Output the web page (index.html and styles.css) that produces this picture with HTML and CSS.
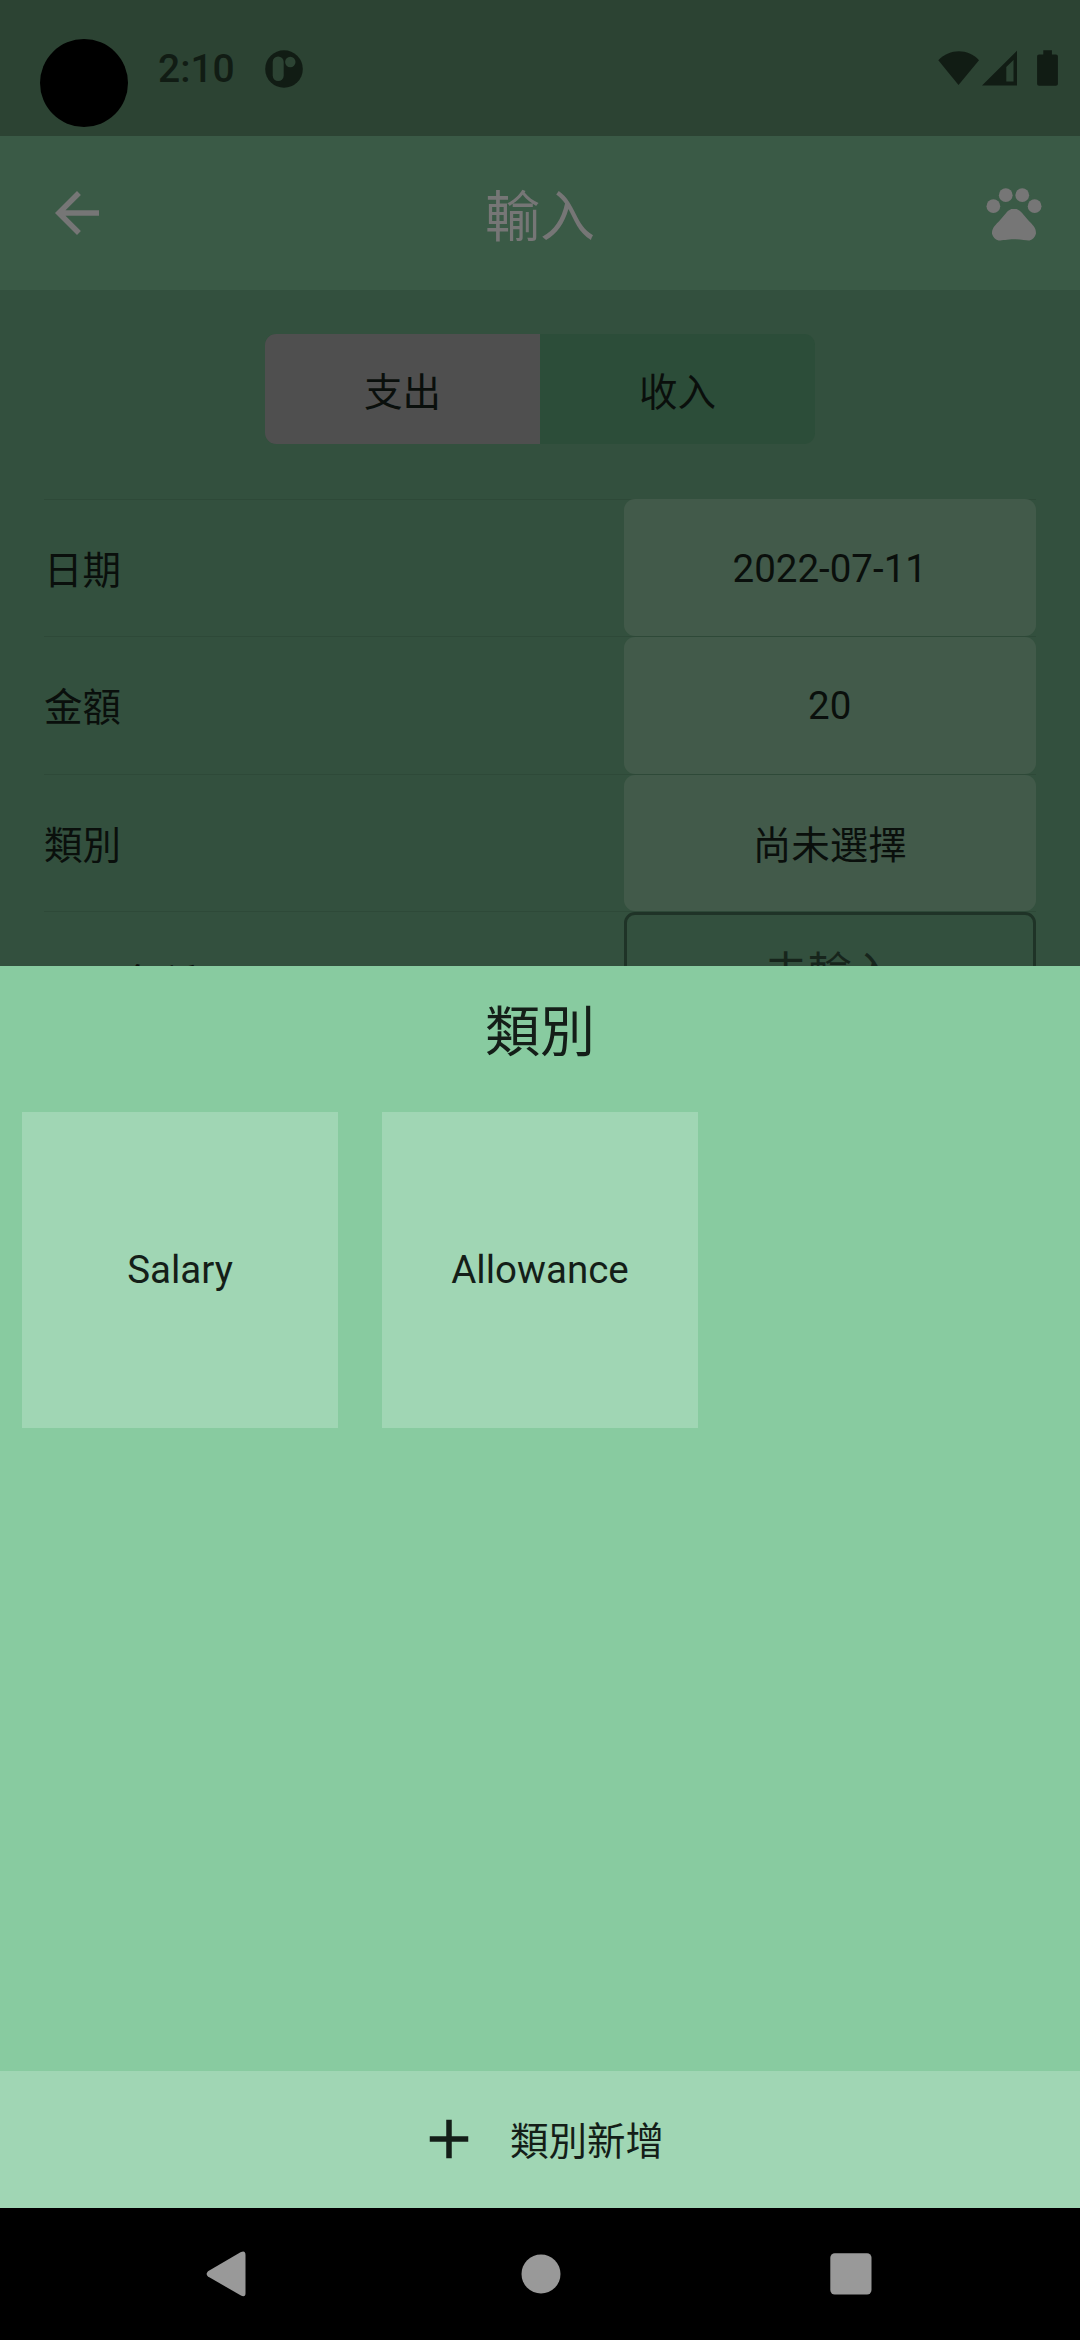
FILE: index.html
```html
<!DOCTYPE html>
<html lang="zh-Hans">
<head>
<meta charset="utf-8">
<title>輸入</title>
<link rel="stylesheet" href="styles.css">
</head>
<body>
<div class="screen">
  <header class="status">
    <div class="camera"></div>
    <span class="clock">2:10</span>
    <svg class="notice" width="38" height="38" viewBox="0 0 38 38"><circle cx="19" cy="19" r="18.8" fill="#111c14"/><rect x="7.7" y="6.5" width="11" height="24.5" rx="5.5" fill="#2c4333"/><circle cx="25.3" cy="12" r="5.2" fill="#2c4333"/></svg>
    <svg class="signals" width="122" height="38" viewBox="0 0 122 38" fill="#111c14"><path d="M.3 10.2C12-1.7 30-1.7 41 10.2L20.500 35z"/><path fill-rule="evenodd" d="M44 35.500L79 .8V35.500zM68.300 17V31.500H75.500V10z"/><path d="M105.300.3h8.600v4.200h4c1.200 0 2 .8 2 2v27.300c0 1.200-.8 2-2 2h-16.800c-1.200 0-2-.8-2-2V6.500c0-1.200.8-2 2-2h4.200z"/></svg>
  </header>
  <nav class="appbar">
    <svg width="66" height="66" viewBox="0 0 24 24"><path d="M20 11H7.830l5.590-5.590L12 4l-8 8 8 8 1.410-1.410L7.830 13H20v-2z"/></svg>
    <h1>輸入</h1>
    <svg width="66" height="66" viewBox="0 0 24 24"><circle cx="4.500" cy="9.500" r="2.500"/><circle cx="9" cy="5.500" r="2.500"/><circle cx="15" cy="5.500" r="2.500"/><circle cx="19.500" cy="9.500" r="2.500"/><path d="M17.340 14.860c-.87-1.020-1.600-1.890-2.480-2.910-.46-.54-1.050-1.080-1.750-1.320-.11-.04-.22-.07-.33-.09-.25-.04-.52-.04-.78-.04s-.53 0-.79.05c-.11.02-.22.05-.33.09-.7.24-1.280.78-1.750 1.320-.87 1.020-1.600 1.890-2.480 2.910-1.310 1.310-2.920 2.760-2.620 4.790.29 1.020 1.020 2.030 2.330 2.320.73.15 3.060-.44 5.540-.44h.18c2.480 0 4.810.58 5.540.44 1.310-.29 2.040-1.310 2.330-2.320.31-2.040-1.300-3.490-2.610-4.800z"/></svg>
  </nav>
  <main class="form">
    <div class="segments"><div class="segment selected"><span class="cjk">支出</span></div><div class="segment"><span class="cjk">收入</span></div></div>
    <div class="rows">
      <div class="row"><span class="cjk">日期</span><div class="value"><span>2022-07-11</span></div></div>
      <div class="row"><span class="cjk">金額</span><div class="value"><span>20</span></div></div>
      <div class="row"><span class="cjk">類別</span><div class="value"><span class="cjk">尚未選擇</span></div></div>
      <div class="row"><span class="cjk">項目名稱</span><div class="value field"><span>未輸入</span></div></div>
    </div>
  </main>
  <section class="sheet">
    <h2>類別</h2>
    <div class="cards"><div class="card">Salary</div><div class="card">Allowance</div></div>
    <div class="add"><svg width="66" height="66" viewBox="0 0 24 24"><path d="M19 13h-6v6h-2v-6H5v-2h6V5h2v6h6v2z"/></svg><span class="cjk">類別新增</span></div>
  </section>
  <footer class="navbar">
    <svg width="40" height="46" viewBox="0 0 40 46"><path d="M34.500 1.200Q39.500-1.300 39.500 4V42Q39.500 47 34.500 44.300L2 25.500Q-.8 23 2 20.200z"/></svg>
    <svg class="home" width="40" height="40" viewBox="0 0 40 40"><circle cx="20" cy="20" r="19.500"/></svg>
    <svg width="42" height="42" viewBox="0 0 42 42"><rect x=".3" y=".3" width="41.200" height="41.200" rx="4.500"/></svg>
  </footer>
</div>
</body>
</html>
```
FILE: styles.css
```css
* { box-sizing: border-box; }
body { margin: 0; }
.screen {
  width: 1080px;
  height: 2340px;
  display: flex;
  flex-direction: column;
  overflow: hidden;
  background: #33503e;
  font-family: Roboto, "Noto Sans CJK SC", sans-serif;
  font-size: 38.5px;
  line-height: 46px;
  color: #0a0f0c;
}
h1, h2 { margin: 0; font-size: 55px; font-weight: 400; line-height: 66px; }
svg { display: block; flex: none; }
.cjk { padding-top: 6px; }

.status { height: 136px; flex: none; display: flex; align-items: flex-start; background: #2c4333; color: #111c14; }
.camera { width: 88px; height: 88px; margin: 39px 0 0 40px; border-radius: 50%; background: #000; }
.clock { width: 136px; margin: 46px 0 0 30px; font-size: 39px; font-weight: 500; }
.notice { margin: 49.500px 0 0 -29.500px; }
.signals { margin: 50px 20px 0 auto; }

.appbar { height: 154px; flex: none; display: flex; align-items: center; justify-content: space-between; padding: 0 33px 0 44px; background: #3a5a46; color: #767676; fill: #767676; }
.appbar h1 { padding: 7px 0 0 11px; margin-right: 22px; }

.form { height: 676px; flex: none; overflow: hidden; padding: 44px 44px 0; }
.segments { width: 550px; height: 110px; margin: 0 auto 54.500px; display: flex; border-radius: 11px; overflow: hidden; background: #2c4d39; }
.segment { flex: 1; display: flex; align-items: center; justify-content: center; padding-top: 1px; }
.selected { background: #4f4f4f; }
.row { height: 137.500px; display: flex; align-items: center; justify-content: space-between; border-top: 1px solid #2e4938; }
.row:last-child .cjk { padding-top: 7px; }
.value { width: 412.500px; height: 136.500px; display: flex; align-items: center; justify-content: center; padding-top: 2px; border-radius: 11px; background: #425a4a; }
.value .cjk { padding-top: 4px; }
.row:first-child .value { height: 137.500px; margin-top: -1px; padding-top: 3px; }
.value.field { padding: 2px 0 15px; border: 3px solid #1f3327; background: none; font-size: 44px; color: #17251c; }

.sheet { height: 1242px; flex: none; display: flex; flex-direction: column; background: #88cba0; color: #141e18; }
.sheet h2 { text-align: center; padding: 33px 0 0; height: 146px; }
.cards { flex: 1; display: flex; gap: 44px; padding: 0 22px; }
.card { width: 316px; height: 316px; display: flex; align-items: center; justify-content: center; background: #a0d6b4; }
.add { height: 137.500px; display: flex; align-items: center; justify-content: center; gap: 28px; background: #a0d6b4; fill: #141e18; }

.navbar { height: 132px; flex: none; display: flex; align-items: center; justify-content: space-between; padding: 0 208px 0 206px; background: #000; fill: #999; }
.home { margin-left: 5px; }
```
